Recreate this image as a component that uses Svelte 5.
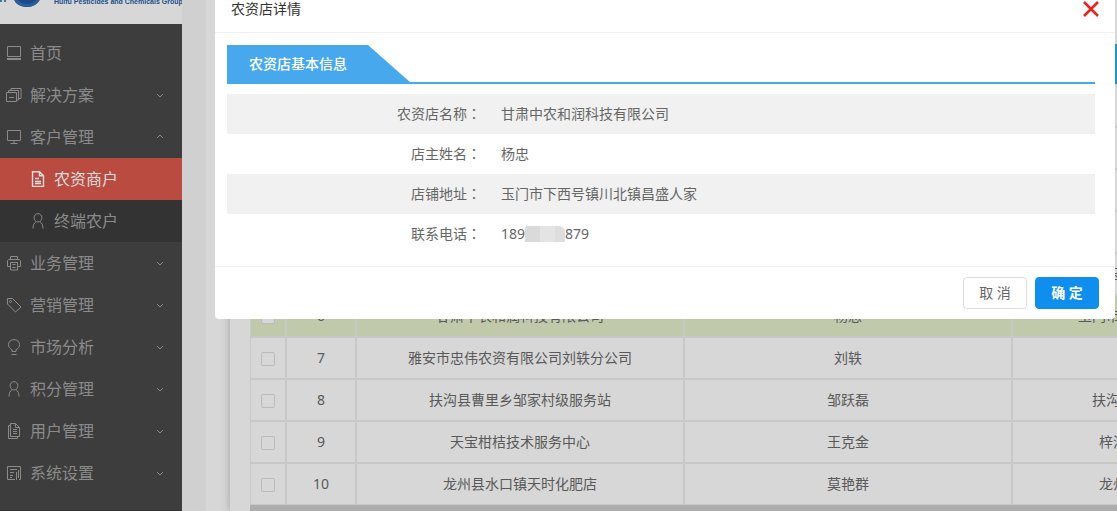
<script>
  const menu = [
    { name: '首页', icon: 'home' },
    { name: '解决方案', icon: 'layers', more: true },
    {
      name: '客户管理', icon: 'screen', more: true, open: true,
      children: [
        { name: '农资商户', icon: 'file', active: true },
        { name: '终端农户', icon: 'user' }
      ]
    },
    { name: '业务管理', icon: 'printer', more: true },
    { name: '营销管理', icon: 'tag', more: true },
    { name: '市场分析', icon: 'bulb', more: true },
    { name: '积分管理', icon: 'user', more: true },
    { name: '用户管理', icon: 'files', more: true },
    { name: '系统设置', icon: 'report', more: true }
  ];

  const shops = [
    { id: 1, name: '', owner: '', address: '' },
    { id: 2, name: '', owner: '', address: '' },
    { id: 3, name: '', owner: '', address: '' },
    { id: 4, name: '', owner: '', address: '' },
    { id: 5, name: '', owner: '', address: '玉门市下西号镇川北镇' },
    { id: 6, name: '甘肃中农和润科技有限公司', owner: '杨忠', address: '玉门市下西号镇川北镇昌盛人家', selected: true },
    { id: 7, name: '雅安市忠伟农资有限公司刘轶分公司', owner: '刘轶', address: '' },
    { id: 8, name: '扶沟县曹里乡邹家村级服务站', owner: '邹跃磊', address: '扶沟县曹里乡邹家村委会旁' },
    { id: 9, name: '天宝柑桔技术服务中心', owner: '王克金', address: '梓潼县文昌镇天宝村三组' },
    { id: 10, name: '龙州县水口镇天时化肥店', owner: '莫艳群', address: '龙州县水口镇天时化肥店' }
  ];
</script>

{#snippet icon(kind)}
  <svg class="icon" viewBox="0 0 16 16" aria-hidden="true">
    {#if kind === 'home'}
      <path d="M1.500 1.500h13v10h-13zM1 13.500h14M1 14.500h14" />
    {:else if kind === 'layers'}
      <path d="M.5 5.5h10v9H.5zM3 10.500h5M2.500 5.500v-2h10v9.500h-2M5 3.500v-2h10V11.500h-2" />
    {:else if kind === 'screen'}
      <path d="M1.500 1.500h13v10h-13zM8 11.500v2.500M4.500 14.500h7" />
    {:else if kind === 'file'}
      <path stroke-width="1.400" d="M2.500.700h7l4 4v10.800h-11zM9.500.700v4h4M5 7.500h4M5 10.500h6M5 12.500h6" />
    {:else if kind === 'user'}
      <path d="M8 .7c2.300 0 3.900 1.700 3.900 4S10.200 9 8 9 4.100 7 4.100 4.700 5.700.7 8 .7zM6 8.700c-1.700 1-3 3.300-3 6.800M10 8.700c1.700 1 3 3.300 3 6.800" />
    {:else if kind === 'printer'}
      <path d="M4.500 4.500v-3h7v3M4 11.500H1.500v-6l1-1h11l1 1v6H12M4.500 7.500h7v7.500h-7zM6.500 9.500h3M6.500 12.500h3" />
    {:else if kind === 'tag'}
      <path d="M1.500 1.500h5l8.500 8.500-5.500 5L1.500 7z" /><circle cx="4.500" cy="4.500" r="1" />
    {:else if kind === 'bulb'}
      <path d="M6 12.500V10.700C3.500 9.500 2.500 7.700 2.500 5.700 2.500 2.700 4.800.6 8 .6s5.500 2.100 5.500 5.100c0 2-1 3.800-3.500 5v1.800zM5.500 15.500h5" />
    {:else if kind === 'files'}
      <path d="M4.500.500h5l4 4v9h-9zM9.500.500v4h4M4.500 2.500h-2v13h9v-2M7 6.500h4M7 8.500h4M7 10.500h4" />
    {:else}
      <path d="M9 14.500h-7.500v-13h13v13H13M4 4.500h7M4 7.500h4M4 10.500h3M4 12.500h2M10.500 7v8M12.500 5v8" />
    {/if}
  </svg>
{/snippet}

<div class="app">
  <aside class="sidebar">
    <div class="brand">
      <svg class="logo" viewBox="0 0 54 28" aria-hidden="true">
        <circle cx="27" cy="14" r="14" fill="#1b4a8a" />
        <path d="M15 17q4 8 12 8t13-9l1 3q-4 9-14 9T14 21z" fill="#2c5d9b" />
        <path d="M0 20h2v3H0zM4 19h2v4H4z" fill="#3a7496" />
      </svg>
      <span class="brand-text">Huifu Pesticides and Chemicals Group</span>
    </div>
    <nav>
      {#each menu as item}
        <a class="item" href="#{item.name}">
          {@render icon(item.icon)}
          <span class="label">{item.name}</span>
          {#if item.more}
            <svg class="arrow" class:up={item.open} viewBox="0 0 10 10" aria-hidden="true"><path d="M2 4l3 3 3-3" /></svg>
          {/if}
        </a>
        {#if item.children}
          <div class="sub">
            {#each item.children as child}
              <a class="item child" class:active={child.active} href="#{child.name}">
                {@render icon(child.icon)}
                <span class="label">{child.name}</span>
              </a>
            {/each}
          </div>
        {/if}
      {/each}
    </nav>
  </aside>

  <main class="main">
    <div class="panel">
      <section class="card">
        <div class="scroller">
          <table class="grid">
            <colgroup><col class="c-check" /><col class="c-no" /><col class="c-wide" /><col class="c-wide" /><col class="c-wide" /></colgroup>
            <thead><tr><th></th><th></th><th></th><th></th><th></th></tr></thead>
            <tbody>
              {#each shops as shop}
                <tr class:selected={shop.selected}>
                  <td><input type="checkbox" aria-label="{shop.id}" /></td>
                  <td>{shop.id}</td>
                  <td>{shop.name}</td>
                  <td>{shop.owner}</td>
                  <td>{shop.address}</td>
                </tr>
              {/each}
            </tbody>
          </table>
        </div>
        <div class="track"></div>
      </section>
    </div>
  </main>

  <div class="modal" role="dialog" aria-labelledby="dialog-title">
    <header class="modal-head">
      <h2 id="dialog-title">农资店详情</h2>
      <button class="close" aria-label="关闭">
        <svg viewBox="0 0 16 16" aria-hidden="true"><path d="M1 1l14 14M15 1L1 15" /></svg>
      </button>
    </header>
    <div class="modal-body">
      <div class="tab"><h3>农资店基本信息</h3></div>
      <table class="info">
        <tbody>
          <tr><th scope="row">农资店名称<i>：</i></th><td>甘肃中农和润科技有限公司</td></tr>
          <tr><th scope="row">店主姓名<i>：</i></th><td>杨忠</td></tr>
          <tr><th scope="row">店铺地址<i>：</i></th><td>玉门市下西号镇川北镇昌盛人家</td></tr>
          <tr><th scope="row">联系电话<i>：</i></th><td><span class="phone">189<span class="mask"></span>879</span></td></tr>
        </tbody>
      </table>
    </div>
    <footer class="modal-foot">
      <button class="btn">取 消</button>
      <button class="btn primary">确 定</button>
    </footer>
  </div>
</div>

<style>
  :global(body) {
    margin: 0;
    background: #d0d0d0;
  }
  .app {
    position: relative;
    display: flex;
    height: 100vh;
    overflow: hidden;
    font: 14px/20px "Noto Sans", "Noto Sans CJK SC", sans-serif;
    color: #595959;
  }
  .app * {
    box-sizing: border-box;
  }
  .sidebar {
    flex: none;
    display: flex;
    flex-direction: column;
    width: 182px;
    border-bottom: 1px solid #333;
    background: #3d3d3d;
  }
  .brand {
    flex: none;
    display: flex;
    align-items: flex-end;
    height: 24px;
    padding-bottom: 17px;
    overflow: hidden;
    background: #d7d7d7;
  }
  .logo {
    flex: none;
    width: 54px;
    height: 28px;
  }
  .brand-text {
    font: bold 7px/10px "Liberation Sans", sans-serif;
    color: #21508c;
    white-space: nowrap;
  }
  nav {
    padding-top: 8px;
  }
  .item {
    display: flex;
    align-items: center;
    gap: 8px;
    height: 42px;
    padding: 0 17px 0 6px;
    color: #8b8b8b;
    font-size: 16px;
    line-height: 24px;
    text-decoration: none;
  }
  .icon {
    flex: none;
    width: 16px;
    height: 16px;
    fill: none;
    stroke: currentColor;
  }
  .label {
    flex: 1;
  }
  .arrow {
    width: 10px;
    height: 10px;
    fill: none;
    stroke: currentColor;
  }
  .up {
    transform: rotate(180deg);
  }
  .sub {
    background: #333;
  }
  .child {
    padding-left: 30px;
  }
  .active {
    background: #b94b41;
    color: #dcdcdc;
  }
  .main {
    flex: 1;
    min-width: 0;
    padding-left: 24px;
    background: #d0d0d0;
  }
  .panel {
    height: 100%;
    padding-left: 24px;
    background: #d7d7d7;
  }
  .card {
    height: 100%;
    padding: 44px 0 0 20px;
    background: #d7d7d7;
    box-shadow: 0 0 8px #a0a0a0;
    overflow: hidden;
  }
  .scroller {
    overflow: hidden;
  }
  .grid {
    width: 1090px;
    table-layout: fixed;
    border-collapse: separate;
    border-spacing: 0;
    border-left: 1px solid #c8c8c8;
  }
  .c-check {
    width: 36px;
  }
  .c-no {
    width: 70px;
  }
  .c-wide {
    width: 328px;
  }
  .grid th,
  .grid td {
    height: 42px;
    padding: 0;
    border-right: 2px solid #c8c8c8;
    border-bottom: 2px solid #c8c8c8;
    text-align: center;
  }
  .grid tr:last-child td {
    height: 41px;
    border-bottom-width: 1px;
  }
  .grid th {
    background: #2591c5;
  }
  .selected {
    background: #c1c9ab;
  }
  .grid input {
    appearance: none;
    display: block;
    width: 14px;
    height: 14px;
    margin: 2px auto 0;
    border: 1px solid #bbb;
    border-radius: 2px;
    background: #d7d7d7;
  }
  .track {
    height: 8px;
    background: #adadad;
  }
  .modal {
    position: absolute;
    top: 0;
    left: 215px;
    right: 2px;
    border-radius: 0 0 4px 4px;
    background: #fff;
    color: #666;
  }
  .modal-head {
    display: flex;
    justify-content: space-between;
    align-items: flex-start;
    height: 33px;
    padding: 0 16px;
    border-bottom: 1px solid #f0f0f0;
  }
  h2,
  h3 {
    margin: 0;
    font-size: 14px;
    font-weight: 400;
    line-height: 18px;
  }
  h2 {
    color: #333;
  }
  .close {
    width: 16px;
    height: 18px;
    padding: 1px 0;
    border: 0;
    background: none;
  }
  .close svg {
    display: block;
    width: 16px;
    height: 16px;
    stroke: #e8231f;
    stroke-width: 2.6;
  }
  .modal-body {
    padding: 12px 20px 12px 12px;
  }
  .tab {
    height: 39px;
    margin-bottom: 10px;
    border-bottom: 2px solid #48a8ee;
  }
  h3 {
    width: 184px;
    height: 38px;
    padding-left: 22px;
    background: #48a8ee;
    clip-path: polygon(0 0, 141px 0, 184px 100%, 0 100%);
    color: #fff;
    font-weight: 500;
    line-height: 38px;
  }
  .info {
    width: 100%;
    table-layout: fixed;
    border-collapse: collapse;
  }
  .info tr:nth-child(odd) {
    background: #f1f1f1;
  }
  .info th {
    width: 254px;
    height: 40px;
    padding: 0;
    font-weight: 400;
    text-align: right;
  }
  .info td {
    padding: 0 0 0 20px;
  }
  .info i {
    font-family: "Noto Sans CJK JP", sans-serif;
    font-style: normal;
    line-height: 16px;
  }
  .phone {
    display: flex;
    align-items: center;
  }
  .mask {
    width: 40px;
    height: 16px;
    border-radius: 2px 6px 0 0;
    background: linear-gradient(90deg, #dadada 38%, #e4e4e4 38% 75%, #dedede 75%);
  }
  .modal-foot {
    display: flex;
    justify-content: flex-end;
    gap: 8px;
    padding: 10px 16px;
    border-top: 1px solid #f0f0f0;
  }
  .btn {
    width: 64px;
    height: 32px;
    padding: 0;
    border: 1px solid #ddd;
    border-radius: 4px;
    background: #fff;
    color: #666;
    font: inherit;
  }
  .primary {
    border-color: #108eee;
    background: #108eee;
    color: #fff;
    font-weight: 700;
  }
</style>
